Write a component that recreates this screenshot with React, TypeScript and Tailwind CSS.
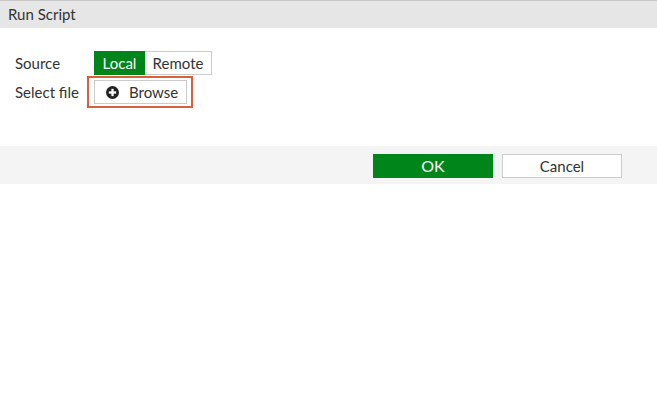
import React from "react";

export default function App() {
  return (
    <div className="w-[657px] h-[400px] bg-white text-[#333] text-[15px]" style={{ fontFamily: "Lato, 'Noto Sans', sans-serif" }}>
      <div className="h-[28px] border-t border-[#c8c8c8] bg-[#e6e6e6] pl-[8px] flex items-center leading-none">
        Run Script
      </div>
      <div className="pt-[23px] pl-[15px]">
        <div className="flex items-center h-[24px]">
          <div className="w-[79px]">Source</div>
          <div className="flex h-[24px]">
            <div className="w-[51px] bg-[#00851a] text-white flex items-center justify-center">Local</div>
            <div className="w-[67px] border border-[#cccccc] border-l-0 bg-white flex items-center justify-center">Remote</div>
          </div>
        </div>
        <div className="flex items-center h-[32px] mt-[1px]">
          <div className="w-[72px]">Select file</div>
          <div className="h-[32px] w-[106px] border-2 border-[#d9603c] pl-[5px] pt-[2px]">
            <div className="w-[93px] h-[24px] border border-[#cccccc] bg-white flex items-center">
              <svg width="13" height="13" viewBox="0 0 16 16" className="ml-[11px]">
                <circle cx="8" cy="8" r="8" fill="#222" />
                <rect x="6.6" y="3.5" width="2.8" height="9" fill="#fff" />
                <rect x="3.5" y="6.6" width="9" height="2.8" fill="#fff" />
              </svg>
              <span className="ml-[10px]">Browse</span>
            </div>
          </div>
        </div>
      </div>
      <div className="mt-[38px] h-[38px] bg-[#f4f4f4] flex justify-end items-start pt-[8px] pr-[35px] gap-[9px]">
        <button className="w-[120px] h-[24px] bg-[#00851a] text-white text-[16px] flex items-center justify-center">OK</button>
        <button className="w-[120px] h-[24px] bg-white border border-[#cccccc] text-[#333] flex items-center justify-center">Cancel</button>
      </div>
    </div>
  );
}
